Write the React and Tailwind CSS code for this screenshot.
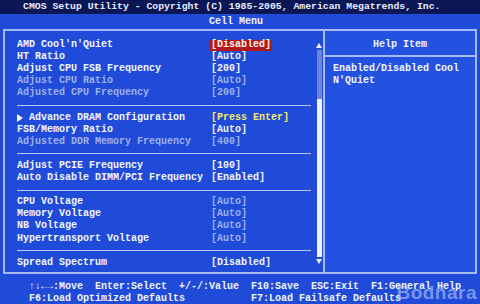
import React from "react";

const rows = [
  { label: "AMD Cool'n'Quiet", value: "[Disabled]", tone: "selected" },
  { label: "HT Ratio", value: "[Auto]" },
  { label: "Adjust CPU FSB Frequency", value: "[200]" },
  { label: "Adjust CPU Ratio", value: "[Auto]", dim: true, tone: "dim" },
  { label: "Adjusted CPU Frequency", value: "[200]", dim: true, tone: "dim" },
  { separator: true },
  { label: "Advance DRAM Configuration", value: "[Press Enter]", tone: "yellow", sub: true },
  { label: "FSB/Memory Ratio", value: "[Auto]" },
  { label: "Adjusted DDR Memory Frequency", value: "[400]", dim: true, tone: "dim" },
  { separator: true },
  { label: "Adjust PCIE Frequency", value: "[100]" },
  { label: "Auto Disable DIMM/PCI Frequency", value: "[Enabled]" },
  { separator: true },
  { label: "CPU Voltage", value: "[Auto]", tone: "dim" },
  { label: "Memory Voltage", value: "[Auto]", tone: "dim" },
  { label: "NB Voltage", value: "[Auto]", tone: "dim" },
  { label: "Hypertransport Voltage", value: "[Auto]", tone: "dim" },
  { separator: true },
  { label: "Spread Spectrum", value: "[Disabled]" }
];

const valueClass = {
  selected: "bg-[#b3191c] text-[#fff4f0] pl-[1px] pr-[1px] -ml-[1px]",
  dim: "text-[#9db1ec]",
  yellow: "text-[#f4e86a]"
};

const SettingRow = ({ row }) => {
  if (row.separator) {
    return (
      <div className="h-[12.1px] flex items-center">
        <div className="w-[294px] h-[1px] bg-[#b9c7f6]" />
      </div>
    );
  }

  return (
    <div className="h-[12.1px] flex items-center leading-[12px]">
      <div
        className={`w-[194px] flex items-center whitespace-pre ${
          row.dim ? "text-[#9db1ec]" : "text-[#f3f6ff]"
        }`}
      >
        {row.sub && (
          <span className="w-[12px] flex items-center">
            <svg width="6" height="8" viewBox="0 0 6 8">
              <path d="M0 0 L6 4 L0 8 Z" fill="#f3f6ff" />
            </svg>
          </span>
        )}
        {row.label}
      </div>
      <div
        className={`h-[11px] flex items-center whitespace-pre ${
          valueClass[row.tone] || "text-[#f3f6ff]"
        }`}
      >
        {row.value}
      </div>
    </div>
  );
};

const ScrollBar = () => (
  <div className="w-[6px] flex flex-col items-center pt-[12px]">
    <svg width="6" height="5" viewBox="0 0 6 5">
      <path d="M3 0 L6 5 L0 5 Z" fill="#eef2ff" />
    </svg>
    <div className="mt-[2px] w-[5px] h-[49px] bg-[#6e86da]" />
    <div className="w-[5px] h-[158px] bg-[#eef2ff]" />
    <svg className="mt-[2px]" width="6" height="5" viewBox="0 0 6 5">
      <path d="M0 0 L6 0 L3 5 Z" fill="#eef2ff" />
    </svg>
  </div>
);

const App = () => {
  return (
    <div
      className="relative w-[480px] h-[304px] overflow-hidden bg-[#1f4bd8] font-bold text-[10px] text-[#f3f6ff]"
      style={{ fontFamily: '"Liberation Mono", "DejaVu Sans Mono", monospace' }}
    >
      <div className="h-[14px] bg-[#0b1654] pl-[23px] text-[9.8px] leading-[14px] text-[#e6ecff] whitespace-pre">
        CMOS Setup Utility - Copyright (C) 1985-2005, American Megatrends, Inc.
      </div>
      <div className="h-[15px] text-center pr-[8px] leading-[15px] text-[#f3f6ff]">
        Cell Menu
      </div>

      <div className="ml-[3px] w-[474px] h-[245px] border-2 border-[#a7b9f1] flex">
        <div className="w-[320px] border-r-2 border-[#a7b9f1] flex">
          <div className="w-[311px] pl-[12px] pt-[8px]">
            {rows.map((row, i) => (
              <SettingRow key={i} row={row} />
            ))}
          </div>
          <ScrollBar />
        </div>

        <div className="flex-1 bg-[#2252df]">
          <div className="h-[26px] border-b-2 border-[#a7b9f1] pt-[8px] text-center leading-[12px]">
            Help Item
          </div>
          <div className="pl-[8px] pt-[6px] leading-[12px] whitespace-pre">
            <div>Enabled/Disabled Cool</div>
            <div>N'Quiet</div>
          </div>
        </div>
      </div>

      <div className="pl-[29px] pt-[7px] leading-[12px] whitespace-pre text-[#f0f4ff]">
        <div>↑↓←→:Move  Enter:Select  +/-/:Value  F10:Save  ESC:Exit  F1:General Help</div>
        <div>F6:Load Optimized Defaults           F7:Load Failsafe Defaults</div>
      </div>

      <div
        className="absolute right-[3px] bottom-[-3px] text-[19px] font-black tracking-[0.5px] text-[#c9d6ff]/55"
        style={{ fontFamily: '"Liberation Sans", Arial, sans-serif' }}
      >
        Bodnara
      </div>
    </div>
  );
};

export default App;
